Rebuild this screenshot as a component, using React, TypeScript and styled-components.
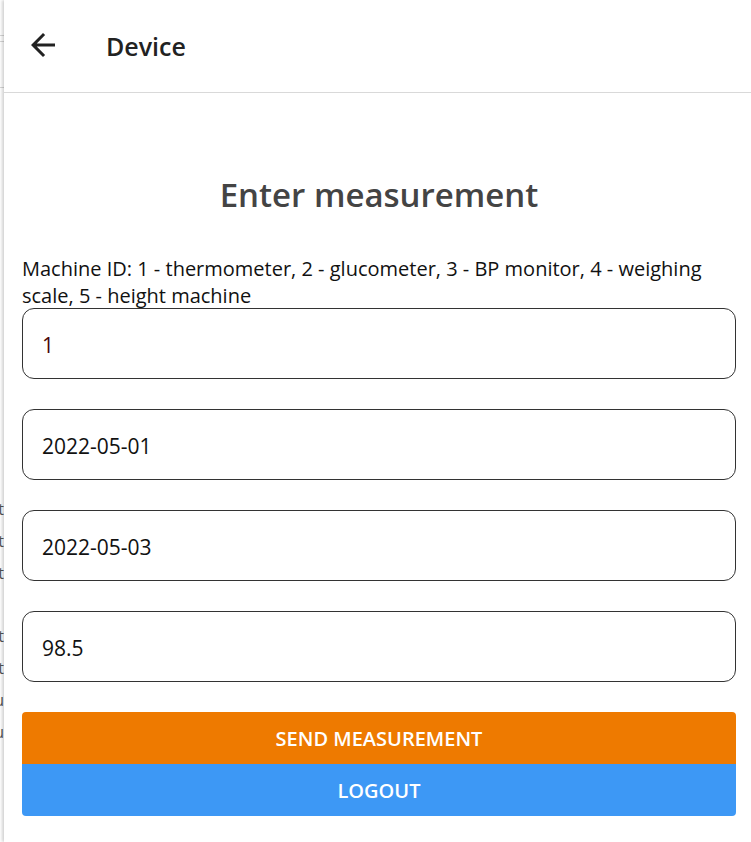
import React from "react";
import styled, { createGlobalStyle } from "styled-components";

const Global = createGlobalStyle`
  html, body { margin: 0; padding: 0; background: #fff; }
  body { font-family: "Open Sans", "Noto Sans", sans-serif; overflow: hidden; }
  * { box-sizing: border-box; }
`;

const Page = styled.div`
  position: relative;
  width: 751px;
  height: 842px;
  overflow: hidden;
  background: #fff;
`;

const Backdrop = styled.div`
  width: 200px;
  margin-left: -196px;
  display: flex;
  flex-direction: column;
  color: #555;
  font-size: 16px;
  text-align: right;
`;

const BackLine = styled.div<{ $top: number }>`
  margin-top: ${(p) => p.$top}px;
  height: 1px;
  background: #d6d6d6;
`;

const BackText = styled.div<{ $top: number }>`
  margin-top: ${(p) => p.$top}px;
  line-height: 32px;
  white-space: nowrap;
`;

const Drawer = styled.div`
  position: absolute;
  top: 0;
  left: 4px;
  right: 0;
  bottom: 0;
  background: #fff;
  box-shadow: -2px 0 3px rgba(0, 0, 0, 0.18);
  display: flex;
  flex-direction: column;
`;

const Header = styled.header`
  height: 93px;
  flex: none;
  display: flex;
  align-items: center;
  border-bottom: 1px solid #d9d9d9;
  padding-left: 21px;
`;

const BackButton = styled.button`
  width: 36px;
  height: 36px;
  padding: 0;
  border: none;
  background: none;
  display: flex;
  align-items: center;
  justify-content: center;
  margin-top: -2px;
  color: #222;
`;

const HeaderTitle = styled.h1`
  margin: 0 0 0 45px;
  font-size: 25px;
  font-weight: 600;
  color: #222;
`;

const Content = styled.main`
  display: flex;
  flex-direction: column;
  padding: 0 15px 0 18px;
`;

const Title = styled.h2`
  margin: 78px 0 0;
  text-align: center;
  font-size: 33px;
  line-height: 48px;
  font-weight: 600;
  color: #444;
`;

const Hint = styled.p`
  margin: 36px 0 0;
  font-size: 20px;
  line-height: 27px;
  color: #111;
`;

const Fields = styled.div`
  display: flex;
  flex-direction: column;
  gap: 30px;
  margin-top: -1px;
`;

const Field = styled.input<{ $ink?: string }>`
  height: 71px;
  width: 100%;
  border: 1px solid #333;
  border-radius: 12px;
  padding: 3px 19px 0;
  font-family: inherit;
  font-size: 21px;
  color: ${(p) => p.$ink ?? "#111"};
  background: #fff;
  outline: none;
`;

const Buttons = styled.div`
  display: flex;
  flex-direction: column;
  margin-top: 30px;
`;

const ActionButton = styled.button<{ $bg: string; $radius: string }>`
  height: 52px;
  border: none;
  border-radius: ${(p) => p.$radius};
  background: ${(p) => p.$bg};
  color: #fff;
  font-family: inherit;
  font-size: 20px;
  font-weight: 600;
  text-transform: uppercase;
`;

export default function App() {
  return (
    <>
      <Global />
      <Page>
        <Backdrop>
          <BackLine $top={35} />
          <BackLine $top={5} />
          <BackLine $top={45} />
          <BackText $top={405}>test</BackText>
          <BackText $top={0}>test</BackText>
          <BackText $top={0}>test</BackText>
          <BackText $top={31}>test</BackText>
          <BackText $top={0}>test</BackText>
          <BackText $top={0}>menu</BackText>
          <BackText $top={0}>menu</BackText>
        </Backdrop>
        <Drawer>
          <Header>
            <BackButton aria-label="back">
              <svg width="36" height="36" viewBox="0 0 24 24" fill="currentColor">
                <path d="M20 11H7.83l5.59-5.59L12 4l-8 8 8 8 1.41-1.41L7.83 13H20v-2z" />
              </svg>
            </BackButton>
            <HeaderTitle>Device</HeaderTitle>
          </Header>
          <Content>
            <Title>Enter measurement</Title>
            <Hint>
              Machine ID: 1 - thermometer, 2 - glucometer, 3 - BP monitor, 4 - weighing scale, 5 - height machine
            </Hint>
            <Fields>
              <Field defaultValue="1" $ink="#4a0606" />
              <Field defaultValue="2022-05-01" />
              <Field defaultValue="2022-05-03" />
              <Field defaultValue="98.5" />
            </Fields>
            <Buttons>
              <ActionButton $bg="#ee7a00" $radius="4px 4px 0 0">Send measurement</ActionButton>
              <ActionButton $bg="#3d98f5" $radius="0 0 4px 4px">Logout</ActionButton>
            </Buttons>
          </Content>
        </Drawer>
      </Page>
    </>
  );
}
